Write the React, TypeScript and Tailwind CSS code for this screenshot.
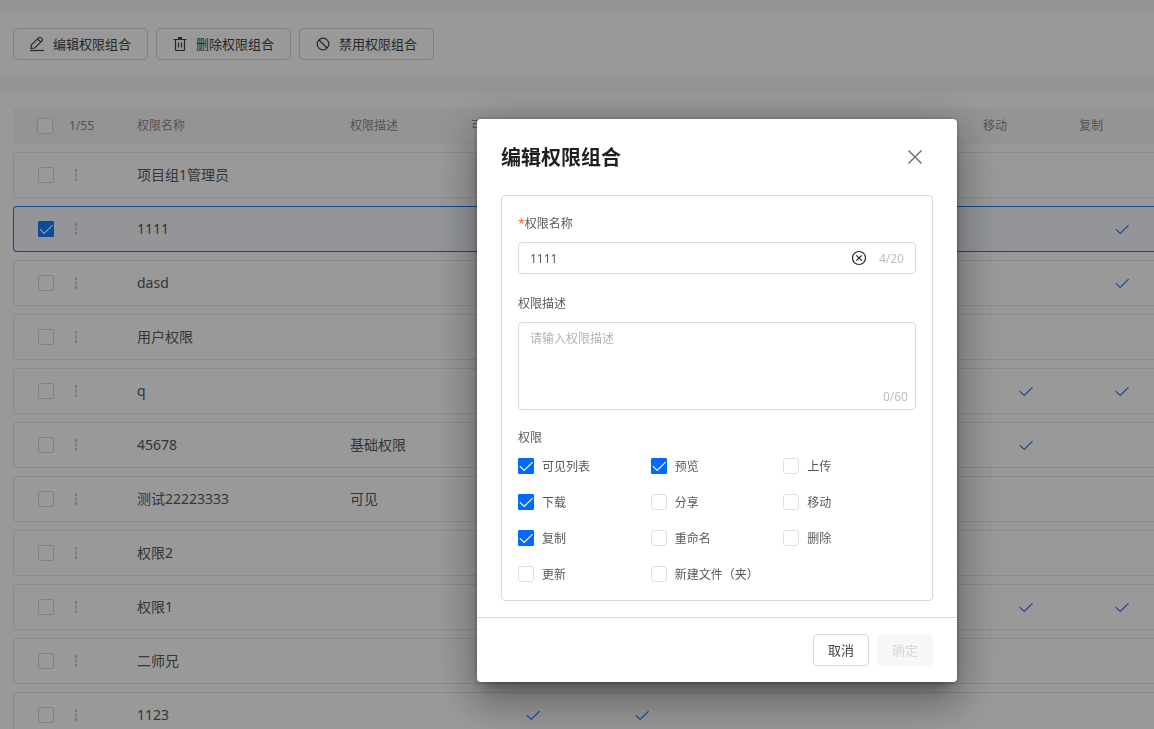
import { useState } from 'react'
import type { ReactNode } from 'react'

// ============================================================================
// DATA
// ============================================================================

const PERMISSIONS = ['可见列表', '预览', '上传', '下载', '分享', '移动', '复制', '重命名', '删除', '更新', '新建文件（夹）']

const COLUMNS = ['可见列表', '预览', '上传', '下载', '分享', '移动', '复制']

interface Row {
  name: string
  desc?: string
  granted: string[]
}

const ROWS: Row[] = [
  { name: '项目组1管理员', granted: [] },
  { name: '1111', granted: ['可见列表', '预览', '下载', '复制'] },
  { name: 'dasd', granted: ['可见列表', '复制'] },
  { name: '用户权限', granted: [] },
  { name: 'q', granted: ['可见列表', '移动', '复制'] },
  { name: '45678', desc: '基础权限', granted: ['移动'] },
  { name: '测试22223333', desc: '可见', granted: [] },
  { name: '权限2', granted: [] },
  { name: '权限1', granted: ['移动', '复制'] },
  { name: '二师兄', granted: [] },
  { name: '1123', granted: ['可见列表', '预览'] }
]

// ============================================================================
// ICONS
// ============================================================================

function Icon({ children, className = 'size-4' }: { children: ReactNode; className?: string }) {
  return (
    <svg viewBox="0 0 16 16" fill="none" stroke="currentColor" className={className} aria-hidden="true">
      {children}
    </svg>
  )
}

const EditIcon = () => (
  <Icon>
    <path
      d="M2 12.6l.5-3.8L9.9 1.6c.5-.5 1.3-.5 1.8 0l1.4 1.3c.5.5.5 1.2 0 1.7L5.7 12l-3.7.6zM8.6 3l3.2 3.1"
      strokeWidth="1.2"
    />
    <path d="M1 14.5h14" strokeWidth="1.2" />
  </Icon>
)

const TrashIcon = () => (
  <Icon>
    <path d="M6 2h4" strokeWidth="2" />
    <path d="M1.5 3.5h13M3.5 4v9.5c0 .6.4 1 1 1h7c.6 0 1-.4 1-1V4M6.5 6.5v5M9.5 6.5v5" strokeWidth="1.2" />
  </Icon>
)

const BanIcon = () => (
  <Icon>
    <circle cx="8" cy="8" r="5.8" strokeWidth="1.2" />
    <path d="M4 4l8 8" strokeWidth="1.2" />
  </Icon>
)

const TickIcon = ({ className = 'size-4' }: { className?: string }) => (
  <Icon className={className}>
    <path d="M1.8 8.1l4.4 4.3 8.4-8.3" strokeWidth="1.1" />
  </Icon>
)

// ============================================================================
// CONTROLS
// ============================================================================

interface CheckboxProps {
  checked: boolean
  onChange: () => void
  label: string
  id?: string
  soft?: boolean
}

function Checkbox({ checked, onChange, label, id, soft }: CheckboxProps) {
  const tone = soft
    ? 'rounded-[3px] border-[#e0e0e0] checked:border-[#006aff] checked:bg-[#006aff]'
    : 'rounded-xs border-[#d9d9d9] checked:border-[#1a7aff] checked:bg-[#1a7aff]'

  return (
    <span className="relative block size-4 shrink-0">
      <input
        type="checkbox"
        id={id}
        aria-label={label}
        checked={checked}
        onChange={onChange}
        className={`block size-4 appearance-none border bg-white checked:rounded-[1px] ${tone}`}
      />
      {checked && <TickIcon className="pointer-events-none absolute inset-0 size-4 text-white" />}
    </span>
  )
}

function ToolbarButton({ icon, label }: { icon: ReactNode; label: string }) {
  return (
    <button className="flex h-8 items-center gap-2 rounded border border-[#d9d9d9] bg-white pr-4 pl-[15px] text-[13px] text-[#434343]">
      {icon}
      <span className="pt-0.5">{label}</span>
    </button>
  )
}

// ============================================================================
// TABLE
// ============================================================================

function PermissionTable() {
  const [selected, setSelected] = useState<string[]>(['1111'])

  const toggle = (name: string) =>
    setSelected(selected.includes(name) ? selected.filter((n) => n !== name) : [...selected, name])

  return (
    <table className="w-[1350px] table-fixed border-separate border-spacing-x-0 border-spacing-y-2 text-left">
      <colgroup>
        <col className="w-[124px]" />
        <col className="w-[213px]" />
        <col className="w-[121px]" />
        <col className="w-[123px]" />
        {COLUMNS.slice(1).map((c) => (
          <col key={c} className="w-24" />
        ))}
        <col />
      </colgroup>
      <thead className="text-xs text-[#8c8c8c]">
        <tr className="*:h-9 *:bg-[#f7f7f7] *:p-0 *:font-normal">
          <th className="rounded-l">
            <div className="flex items-center gap-4 pl-6">
              <Checkbox checked={false} onChange={() => setSelected([])} label="全选" />
              1/55
            </div>
          </th>
          <th>权限名称</th>
          <th>权限描述</th>
          <th>可见列表</th>
          {COLUMNS.slice(1).map((c) => (
            <th key={c}>
              <span className="pl-[5px]">{c}</span>
            </th>
          ))}
          <th />
        </tr>
      </thead>
      <tbody className="text-sm text-[#595959]">
        {ROWS.map((row) => {
          const active = selected.includes(row.name)
          return (
            <tr
              key={row.name}
              className={
                active
                  ? '*:h-[46px] *:border-y *:border-[#1a7aff] *:bg-[#f5f9ff] *:p-0'
                  : '*:h-[46px] *:border-y *:border-[#e8e8e8] *:p-0'
              }
            >
              <td className="rounded-l border-l">
                <div className="flex items-center gap-[14px] pl-6">
                  <Checkbox checked={active} onChange={() => toggle(row.name)} label={row.name} />
                  <button aria-label="更多" className="text-[#cccccc]">
                    <Icon>
                      <path d="M8 2v3M8 6.5v3M8 11v3" strokeWidth="2" />
                    </Icon>
                  </button>
                </div>
              </td>
              <td>{row.name}</td>
              <td>{row.desc}</td>
              {COLUMNS.map((c) => (
                <td key={c}>
                  {row.granted.includes(c) && (
                    <div className="flex justify-center text-[#1a7aff]">
                      <TickIcon />
                    </div>
                  )}
                </td>
              ))}
              <td />
            </tr>
          )
        })}
      </tbody>
    </table>
  )
}

// ============================================================================
// DIALOG
// ============================================================================

function EditDialog() {
  const [name, setName] = useState('1111')
  const [desc, setDesc] = useState('')
  const [checked, setChecked] = useState<string[]>(['可见列表', '预览', '下载', '复制'])

  const toggle = (p: string) =>
    setChecked(checked.includes(p) ? checked.filter((n) => n !== p) : [...checked, p])

  return (
    <div
      role="dialog"
      aria-labelledby="dialog-title"
      className="w-[480px] rounded bg-white text-xs text-[#595959] shadow-[0_11px_15px_-7px_rgba(0,0,0,0.3),0_24px_38px_3px_rgba(0,0,0,0.18),0_9px_46px_8px_rgba(0,0,0,0.18),0_0_4px_0_rgba(0,0,0,0.3)]"
    >
      {/* Header */}
      <div className="flex h-[76px] items-center justify-between pr-[34px] pl-6">
        <h2 id="dialog-title" className="pt-0.5 text-xl font-bold text-[#1f1f1f]">
          编辑权限组合
        </h2>
        <button aria-label="关闭" className="text-[#737373]">
          <Icon>
            <path d="M1.5 1.5l13 13M14.5 1.5l-13 13" strokeWidth="1.5" />
          </Icon>
        </button>
      </div>

      {/* Form */}
      <form className="mx-6 mb-4 rounded border border-[#d9d9d9] px-4 py-[18px]">
        <label htmlFor="perm-name" className="block leading-5">
          <span className="text-[#f5622d]">*</span>权限名称
        </label>
        <div className="mt-2 flex h-8 items-center rounded border border-[#d9d9d9] px-[11px]">
          <input
            id="perm-name"
            value={name}
            maxLength={20}
            onChange={(e) => setName(e.target.value)}
            className="min-w-0 flex-1 pt-0.5 outline-none"
          />
          <button type="button" aria-label="清空" onClick={() => setName('')} className="text-[#262626]">
            <Icon>
              <circle cx="8" cy="8" r="6.5" strokeWidth="1.2" />
              <path d="M5.3 5.3l5.4 5.4M10.7 5.3l-5.4 5.4" strokeWidth="1.2" />
            </Icon>
          </button>
          <span className="ml-3 pt-0.5 text-[#bfbfbf]">{name.length}/20</span>
        </div>

        <label htmlFor="perm-desc" className="mt-5 block leading-5">
          权限描述
        </label>
        <div className="relative mt-2">
          <textarea
            id="perm-desc"
            value={desc}
            maxLength={60}
            placeholder="请输入权限描述"
            onChange={(e) => setDesc(e.target.value)}
            className="block h-[88px] w-full resize-none rounded border border-[#d9d9d9] px-[11px] py-[7px] leading-[18px] outline-none placeholder:text-[#b3b3b3]"
          />
          <span className="absolute right-2 bottom-1 leading-[18px] text-[#bfbfbf]">{desc.length}/60</span>
        </div>

        <fieldset className="mt-[18px]">
          <legend className="leading-5">权限</legend>
          <div className="mt-[10px] grid grid-cols-3 gap-y-5">
            {PERMISSIONS.map((p, i) => (
              <div key={p} className="flex h-4 items-center gap-2">
                <Checkbox soft id={`perm-${i}`} checked={checked.includes(p)} onChange={() => toggle(p)} label={p} />
                <label htmlFor={`perm-${i}`} className="pt-0.5">
                  {p}
                </label>
              </div>
            ))}
          </div>
        </fieldset>
      </form>

      {/* Footer */}
      <div className="flex justify-end gap-2 border-t border-[#d9d9d9] px-6 py-4">
        <button className="h-8 w-14 rounded border border-[#d9d9d9] pt-0.5 text-[13px] text-[#434343]">取消</button>
        <button disabled className="h-8 w-14 rounded bg-[#f7f7f7] pt-0.5 text-[13px] text-[#d9d9d9]">
          确定
        </button>
      </div>
    </div>
  )
}

export default function App() {
  return (
    <div className="h-screen overflow-hidden bg-[#f7f7f7] font-['Noto_Sans','Noto_Sans_CJK_SC',sans-serif]">
      <div className="flex h-full flex-col gap-4 pt-3">
        <div className="flex gap-2 bg-white px-[13px] py-4">
          <ToolbarButton icon={<EditIcon />} label="编辑权限组合" />
          <ToolbarButton icon={<TrashIcon />} label="删除权限组合" />
          <ToolbarButton icon={<BanIcon />} label="禁用权限组合" />
        </div>
        <div className="min-h-0 flex-1 overflow-hidden bg-white pt-2 pl-[13px]">
          <PermissionTable />
        </div>
      </div>

      {/* Modal backdrop */}
      <div className="fixed inset-0 flex items-start justify-center bg-black/40 pt-[119px] pl-[280px]">
        <EditDialog />
      </div>
    </div>
  )
}
